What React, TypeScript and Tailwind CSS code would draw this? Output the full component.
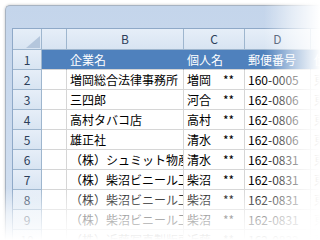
import type { ReactNode } from "react"

const font = { fontFamily: '"Noto Sans CJK JP", "Noto Sans", sans-serif' }

const rows: [string, string, string, string][] = [
  ["増岡総合法律事務所", "増岡　**", "160-0005", "東京都新宿区"],
  ["三四郎", "河合　**", "162-0806", "東京都新宿区"],
  ["高村タバコ店", "高村　**", "162-0806", "東京都新宿区"],
  ["雄正社", "清水　**", "162-0806", "東京都新宿区"],
  ["（株）シュミット物産", "清水　**", "162-0831", "東京都新宿区"],
  ["（株）柴沼ビニール工業", "柴沼　**", "162-0831", "東京都新宿区"],
  ["（株）柴沼ビニール工業", "柴沼　**", "162-0831", "東京都新宿区"],
  ["（株）柴沼ビニール工業", "柴沼　**", "162-0831", "東京都新宿区"],
  ["（株）近藤写真製版所", "近藤　**", "162-0832", "東京都新宿区"],
]

const Head = ({ children }: { children?: ReactNode }) => (
  <div className="flex items-center justify-center border-r border-b border-[#9eb6ce] bg-gradient-to-b from-[#e6eef8] to-[#d8e4f2] text-[12px] text-[#2c3e5a]">
    {children}
  </div>
)

const Cell = ({ children, blue }: { children?: ReactNode; blue?: boolean }) => (
  <div
    className={
      blue
        ? "flex items-center overflow-hidden whitespace-nowrap border-r border-b border-r-[#4f81bd] border-b-[#d4d4d4] bg-[#4f81bd] pl-[3px] text-[12px] text-white"
        : "flex items-center overflow-hidden whitespace-nowrap border-r border-b border-[#d6d6d6] bg-white pl-[3px] text-[12px] text-black"
    }
  >
    {children}
  </div>
)

export default function App() {
  return (
    <div className="relative h-[240px] w-[320px] overflow-hidden bg-white" style={font}>
      <div className="ml-[5px] mt-[5px] w-[330px] rounded-tl-[5px] border-l border-t border-[#a7b3c2] bg-gradient-to-b from-[#c4d5eb] to-[#d4e1f1] pl-[6px] pt-[22px] shadow-[0_0_3px_rgba(0,0,0,0.25)]">
        <div className="grid grid-cols-[29px_25px_117px_61px_66px_80px] grid-rows-[21px_repeat(10,20px)] border-l border-t border-[#8fa9c8]">
          <div className="relative border-r border-b border-[#9eb6ce] bg-gradient-to-b from-[#e6eef8] to-[#d8e4f2]">
            <svg className="absolute right-[1px] bottom-[1px]" width="14" height="12" viewBox="0 0 14 12">
              <polygon points="14,0 14,12 0,12" fill="#b4c6dc" />
            </svg>
          </div>
          <Head />
          <Head>B</Head>
          <Head>C</Head>
          <Head>D</Head>
          <Head />

          <Head>1</Head>
          <Cell blue />
          <Cell blue>企業名</Cell>
          <Cell blue>個人名</Cell>
          <Cell blue>郵便番号</Cell>
          <Cell blue>住所</Cell>

          {rows.map((r, i) => (
            <div key={i} className="contents">
              <Head>{i + 2}</Head>
              <Cell />
              <Cell>{r[0]}</Cell>
              <Cell>{r[1]}</Cell>
              <Cell>{r[2]}</Cell>
              <Cell>{r[3]}</Cell>
            </div>
          ))}
        </div>
      </div>
      {/* fades to white on the right and bottom */}
      <div className="pointer-events-none absolute top-0 right-0 h-full w-[56px] bg-gradient-to-r from-white/0 via-white/55 to-white" />
      <div className="pointer-events-none absolute bottom-0 left-0 h-[52px] w-full bg-gradient-to-b from-white/0 via-white/60 to-white" />
    </div>
  )
}
